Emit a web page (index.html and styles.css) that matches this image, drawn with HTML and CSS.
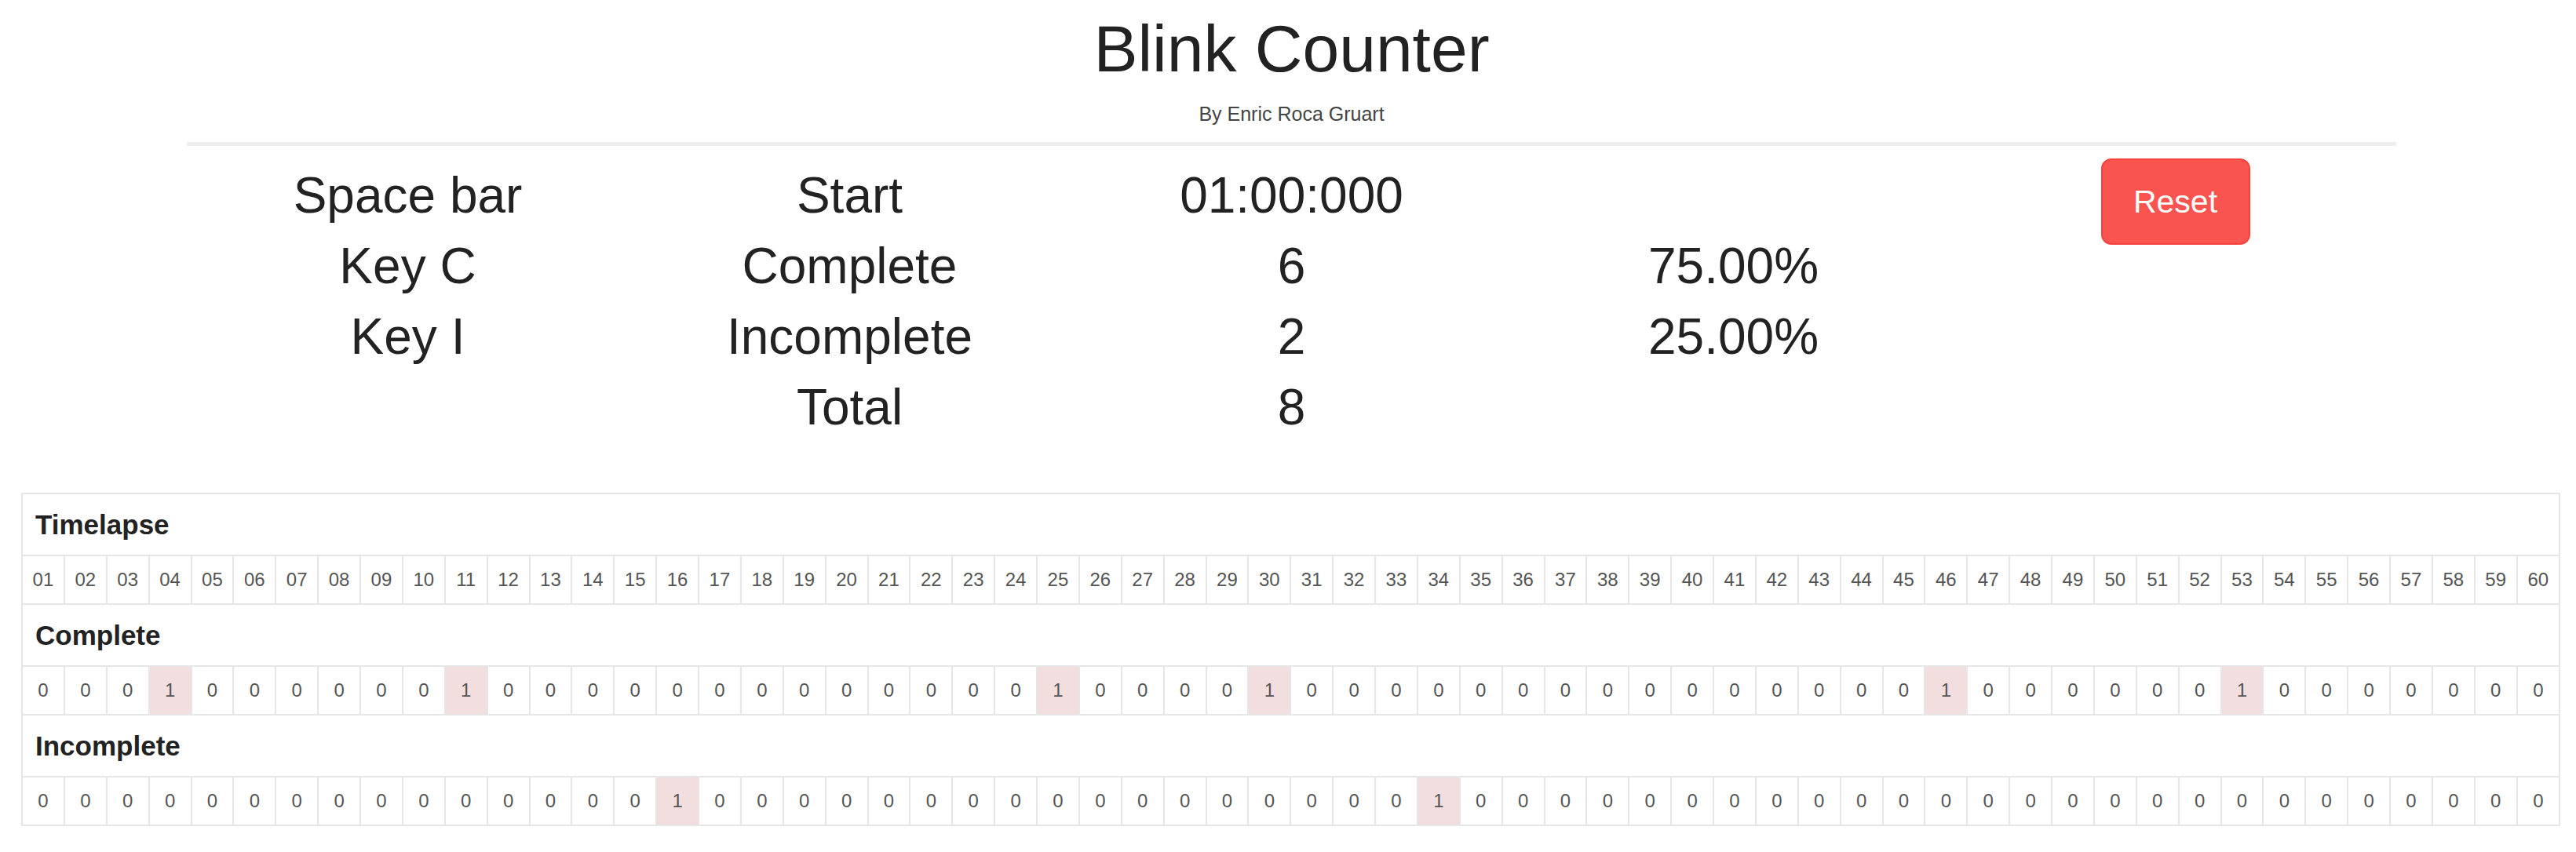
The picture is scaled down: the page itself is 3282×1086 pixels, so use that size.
FILE: index.html
```html
<!DOCTYPE html>
<html>

<head>
  <!-- Blink counter page -->
  <title>Blink Counter</title>
  <link rel="stylesheet" href="styles.css">
</head>

<body>
  <!-- Header and counters -->
  <div class="container">
    <h1 class="title">Blink Counter</h1>
    <p class="author">By Enric Roca Gruart</p>
    <hr>

    <div class="stats">
      <div>Space bar</div>
      <div>Start</div>
      <div id="timer">01:00:000</div>
      <div></div>
      <div class="reset-cell"><button class="reset">Reset</button></div>

      <div>Key C</div>
      <div>Complete</div>
      <div id="complete">6</div>
      <div id="completePct">75.00%</div>
      <div></div>

      <div>Key I</div>
      <div>Incomplete</div>
      <div id="incomplete">2</div>
      <div id="incompletePct">25.00%</div>
      <div></div>

      <div></div>
      <div>Total</div>
      <div id="total">8</div>
      <div></div>
      <div></div>
    </div>
  </div>

  <!-- Blinks per second -->
  <table class="timelapse">
    <tr class="label"><td colspan="60">Timelapse</td></tr>
    <tr>
      <td>01</td><td>02</td><td>03</td><td>04</td><td>05</td><td>06</td><td>07</td><td>08</td><td>09</td><td>10</td>
      <td>11</td><td>12</td><td>13</td><td>14</td><td>15</td><td>16</td><td>17</td><td>18</td><td>19</td><td>20</td>
      <td>21</td><td>22</td><td>23</td><td>24</td><td>25</td><td>26</td><td>27</td><td>28</td><td>29</td><td>30</td>
      <td>31</td><td>32</td><td>33</td><td>34</td><td>35</td><td>36</td><td>37</td><td>38</td><td>39</td><td>40</td>
      <td>41</td><td>42</td><td>43</td><td>44</td><td>45</td><td>46</td><td>47</td><td>48</td><td>49</td><td>50</td>
      <td>51</td><td>52</td><td>53</td><td>54</td><td>55</td><td>56</td><td>57</td><td>58</td><td>59</td><td>60</td>
    </tr>
    <tr class="label"><td colspan="60">Complete</td></tr>
    <tr>
      <td>0</td><td>0</td><td>0</td><td class="hit">1</td><td>0</td><td>0</td><td>0</td><td>0</td><td>0</td><td>0</td>
      <td class="hit">1</td><td>0</td><td>0</td><td>0</td><td>0</td><td>0</td><td>0</td><td>0</td><td>0</td><td>0</td>
      <td>0</td><td>0</td><td>0</td><td>0</td><td class="hit">1</td><td>0</td><td>0</td><td>0</td><td>0</td><td class="hit">1</td>
      <td>0</td><td>0</td><td>0</td><td>0</td><td>0</td><td>0</td><td>0</td><td>0</td><td>0</td><td>0</td>
      <td>0</td><td>0</td><td>0</td><td>0</td><td>0</td><td class="hit">1</td><td>0</td><td>0</td><td>0</td><td>0</td>
      <td>0</td><td>0</td><td class="hit">1</td><td>0</td><td>0</td><td>0</td><td>0</td><td>0</td><td>0</td><td>0</td>
    </tr>
    <tr class="label"><td colspan="60">Incomplete</td></tr>
    <tr>
      <td>0</td><td>0</td><td>0</td><td>0</td><td>0</td><td>0</td><td>0</td><td>0</td><td>0</td><td>0</td>
      <td>0</td><td>0</td><td>0</td><td>0</td><td>0</td><td class="hit">1</td><td>0</td><td>0</td><td>0</td><td>0</td>
      <td>0</td><td>0</td><td>0</td><td>0</td><td>0</td><td>0</td><td>0</td><td>0</td><td>0</td><td>0</td>
      <td>0</td><td>0</td><td>0</td><td class="hit">1</td><td>0</td><td>0</td><td>0</td><td>0</td><td>0</td><td>0</td>
      <td>0</td><td>0</td><td>0</td><td>0</td><td>0</td><td>0</td><td>0</td><td>0</td><td>0</td><td>0</td>
      <td>0</td><td>0</td><td>0</td><td>0</td><td>0</td><td>0</td><td>0</td><td>0</td><td>0</td><td>0</td>
    </tr>
  </table>
</body>

</html>
```

FILE: styles.css
```css
/* Reset and base font */
* {
  margin: 0;
  padding: 0;
  box-sizing: border-box;
}

body {
  font-family: "Liberation Sans", Arial, sans-serif;
  color: #222;
  background: #fff;
}

/* Centered header block */
.container {
  width: 2815px;
  margin-left: 238px;
  text-align: center;
}

.title {
  margin-top: 16px;
  font-size: 84px;
  font-weight: normal;
  line-height: 92px;
}

.author {
  margin-top: 20px;
  font-size: 25px;
  line-height: 34px;
  color: #444;
}

hr {
  border: 0;
  border-top: 5px solid #eee;
  margin: 19px 0 18px;
}

/* Counters: five columns, four rows */
.stats {
  display: grid;
  grid-template-columns: repeat(5, 1fr);
  grid-auto-rows: 90px;
  font-size: 64px;
  line-height: 90px;
}

.reset-cell {
  display: flex;
  justify-content: center;
  align-items: flex-start;
}

.reset {
  width: 190px;
  height: 110px;
  margin-top: -2px;
  border: 2px solid #f4433f;
  border-radius: 13px;
  background: #fa5450;
  color: #fff;
  font-family: "Liberation Sans", Arial, sans-serif;
  font-size: 41px;
  cursor: pointer;
}

/* Timelapse table */
.timelapse {
  width: 3235px;
  margin: 64px 0 0 27px;
  border-collapse: collapse;
  table-layout: fixed;
}

.timelapse td {
  height: 62px;
  border: 2px solid #e6e6e6;
  text-align: center;
  font-size: 24px;
  color: #555;
}

.timelapse .label td {
  height: 79px;
  padding-left: 16px;
  text-align: left;
  font-size: 35px;
  font-weight: bold;
  color: #222;
}

.timelapse td.hit {
  background: #f2dede;
}
```
